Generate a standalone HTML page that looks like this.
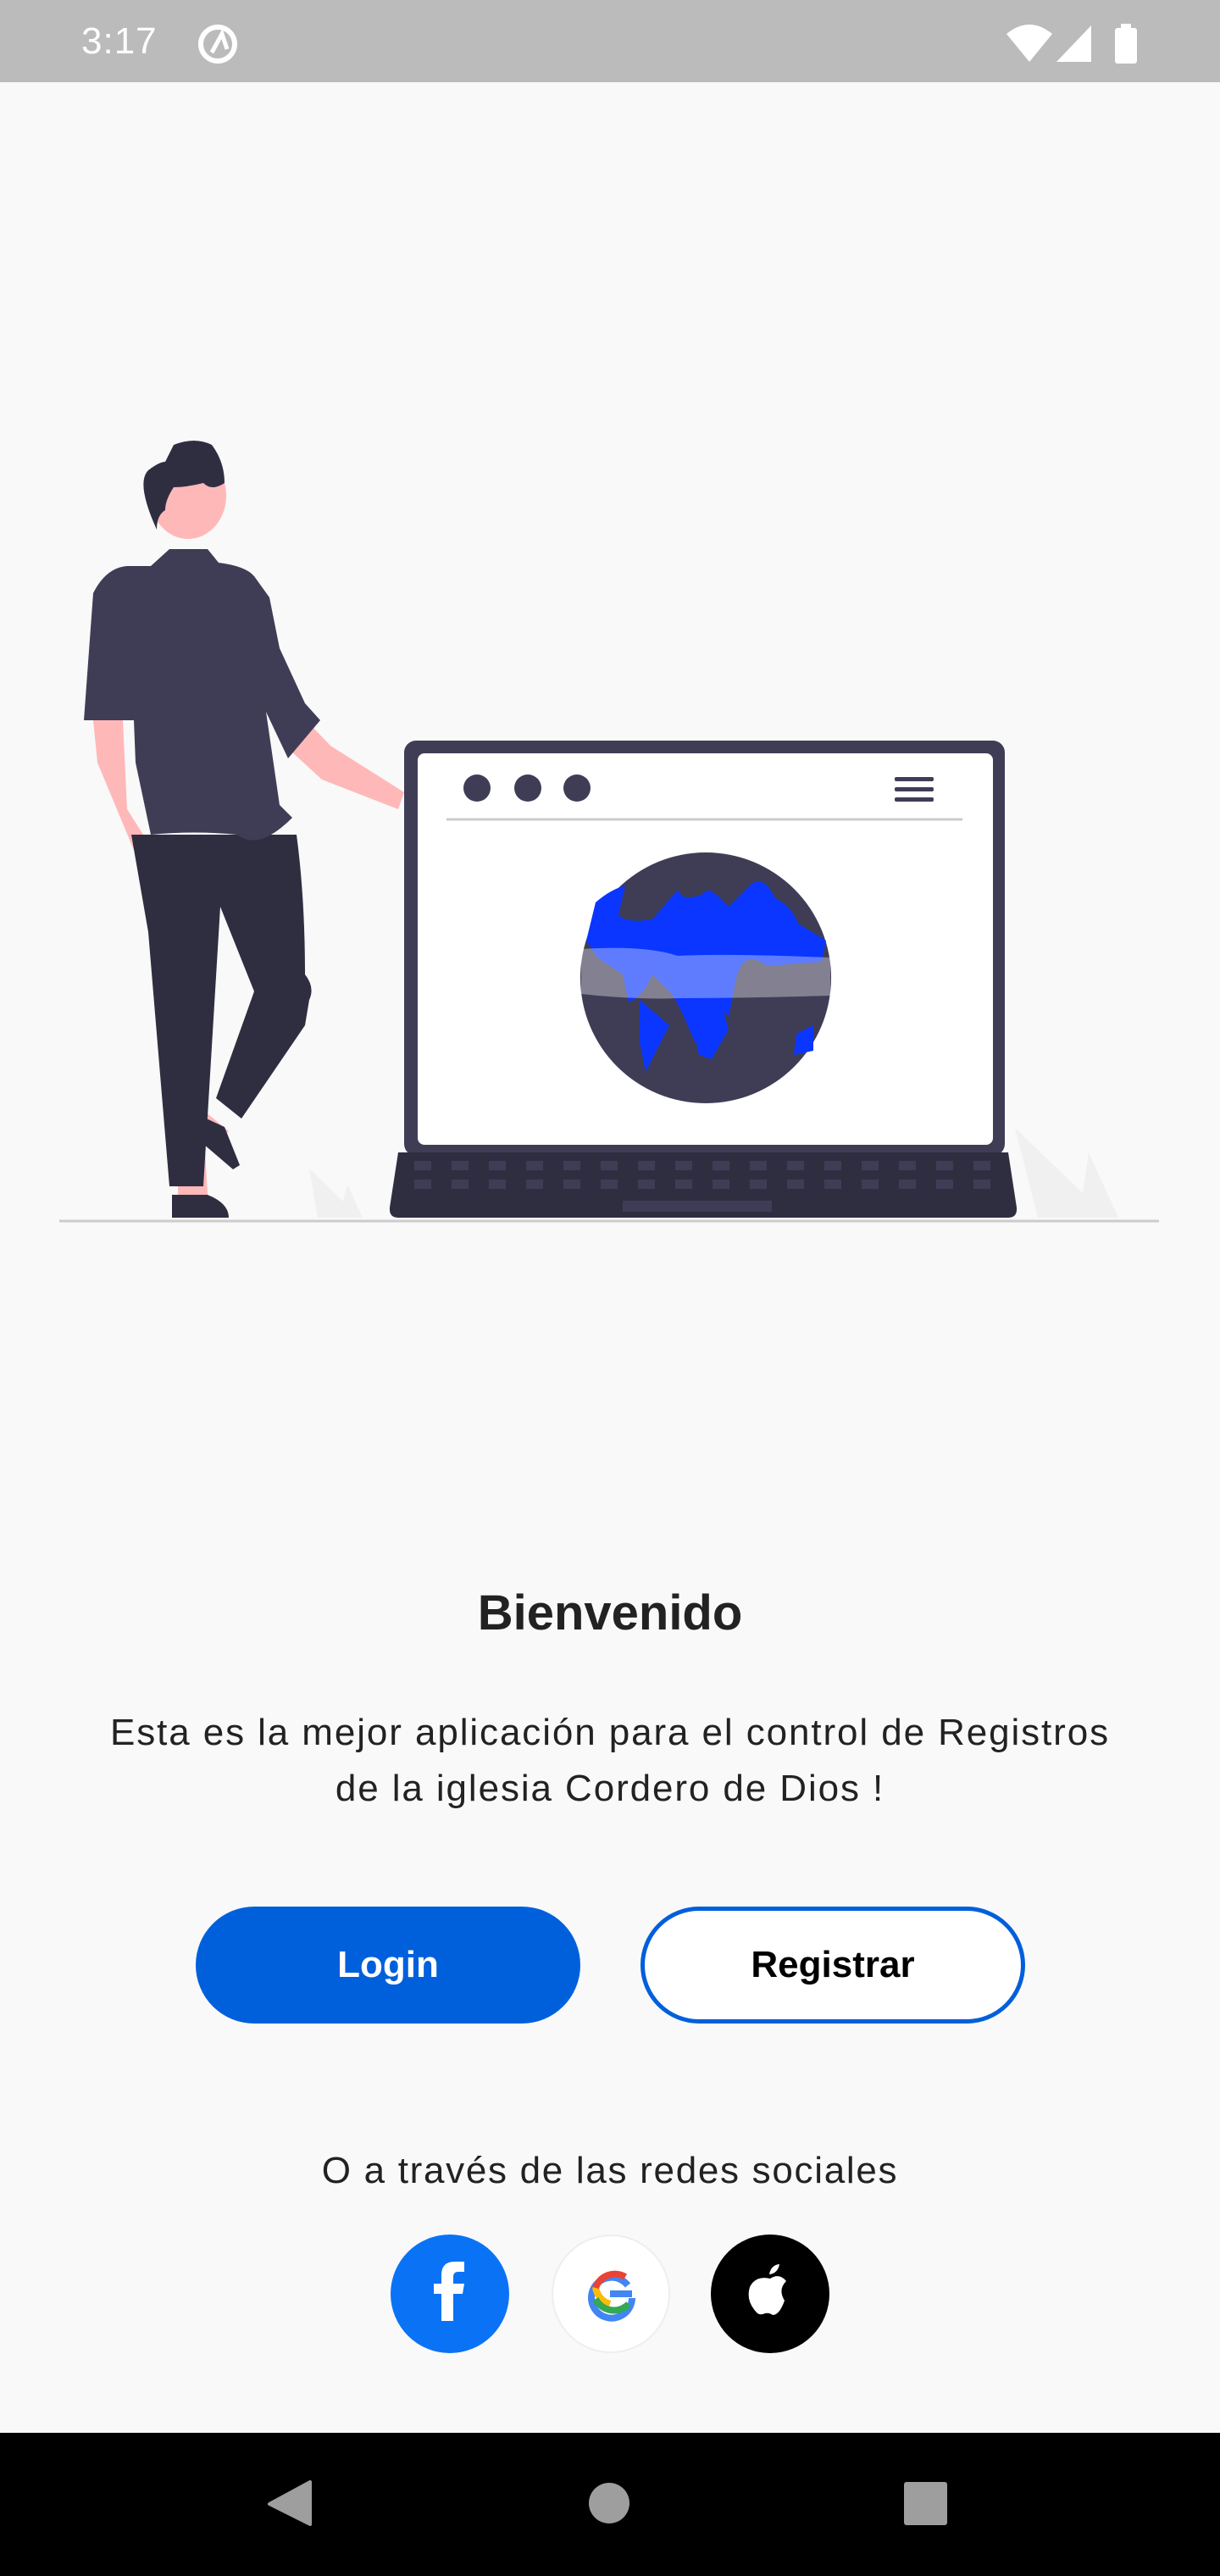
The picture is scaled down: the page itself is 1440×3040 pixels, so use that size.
<!DOCTYPE html>
<html><head><meta charset="utf-8"><style>
html,body{margin:0;padding:0;}
body{width:1440px;height:3040px;background:#f9f9f9;position:relative;overflow:hidden;font-family:"Liberation Sans",sans-serif;}
.abs{position:absolute;}
.status{left:0;top:0;width:1440px;height:97px;background:#bbbbbb;}
.time{left:96px;top:24px;color:#fff;font-size:44px;letter-spacing:1px;}
h1{position:absolute;left:0;width:1440px;top:1870px;margin:0;text-align:center;font-size:58px;font-weight:bold;color:#222;}
.p{left:0;width:1440px;top:2012px;text-align:center;font-size:44px;letter-spacing:1.9px;line-height:66px;color:#222;}
.btn{top:2250px;height:138px;width:454px;border-radius:69px;box-sizing:border-box;text-align:center;line-height:138px;font-size:44px;font-weight:bold;}
.login{left:231px;background:#0060dc;color:#fff;}
.reg{left:756px;background:#fff;border:5px solid #005fdb;line-height:128px;color:#000;}
.o{left:0;width:1440px;top:2537px;text-align:center;font-size:44px;letter-spacing:1.7px;color:#222;}
.c{top:2637px;width:140px;height:140px;border-radius:50%;}
.nav{left:0;top:2871px;width:1440px;height:169px;background:#000;}
</style></head><body>
<div class="abs status"></div>
<div class="abs time">3:17</div>
<svg class="abs" style="left:0;top:0" width="1440" height="97">
<circle cx="257" cy="52" r="20" fill="none" stroke="#fff" stroke-width="6"/>
<path d="M250 62 L262 40 L268 58" fill="none" stroke="#fff" stroke-width="5"/>
<path d="M1188 40 Q1215 18 1242 40 L1215 73 Z" fill="#fff"/>
<path d="M1247 73 L1288 30 L1288 73 Z" fill="#fff"/>
<rect x="1316" y="33" width="26" height="42" rx="3" fill="#fff"/>
<rect x="1323" y="28" width="12" height="6" fill="#fff"/>
</svg>

<svg class="abs" style="left:0;top:0" width="1440" height="1500">
<line x1="70" y1="1441" x2="1368" y2="1441" stroke="#cccccc" stroke-width="3"/>
<path d="M365 1379 L405 1418 L410 1398 L428 1437 L375 1437 Z" fill="#f0f0f0"/>
<path d="M1198 1331 L1278 1408 L1285 1360 L1320 1437 L1225 1437 Z" fill="#f0f0f0"/>
<rect x="477" y="874" width="709" height="490" rx="14" fill="#3f3d56"/>
<rect x="493" y="889" width="679" height="462" rx="8" fill="#fff"/>
<path d="M470 1360 L1190 1360 L1200 1425 Q1201 1437 1190 1437 L470 1437 Q459 1437 460 1425 Z" fill="#2f2e41"/>
<g fill="#3f3d56">
<rect x="489" y="1370" width="20" height="11"/><rect x="533" y="1370" width="20" height="11"/><rect x="577" y="1370" width="20" height="11"/><rect x="621" y="1370" width="20" height="11"/><rect x="665" y="1370" width="20" height="11"/><rect x="709" y="1370" width="20" height="11"/><rect x="753" y="1370" width="20" height="11"/><rect x="797" y="1370" width="20" height="11"/><rect x="841" y="1370" width="20" height="11"/><rect x="885" y="1370" width="20" height="11"/><rect x="929" y="1370" width="20" height="11"/><rect x="973" y="1370" width="20" height="11"/><rect x="1017" y="1370" width="20" height="11"/><rect x="1061" y="1370" width="20" height="11"/><rect x="1105" y="1370" width="20" height="11"/><rect x="1149" y="1370" width="20" height="11"/>
<rect x="489" y="1392" width="20" height="11"/><rect x="533" y="1392" width="20" height="11"/><rect x="577" y="1392" width="20" height="11"/><rect x="621" y="1392" width="20" height="11"/><rect x="665" y="1392" width="20" height="11"/><rect x="709" y="1392" width="20" height="11"/><rect x="753" y="1392" width="20" height="11"/><rect x="797" y="1392" width="20" height="11"/><rect x="841" y="1392" width="20" height="11"/><rect x="885" y="1392" width="20" height="11"/><rect x="929" y="1392" width="20" height="11"/><rect x="973" y="1392" width="20" height="11"/><rect x="1017" y="1392" width="20" height="11"/><rect x="1061" y="1392" width="20" height="11"/><rect x="1105" y="1392" width="20" height="11"/><rect x="1149" y="1392" width="20" height="11"/>
<rect x="735" y="1417" width="176" height="13"/>
<circle cx="563" cy="930" r="16"/><circle cx="623" cy="930" r="16"/><circle cx="681" cy="930" r="16"/>
<rect x="1056" y="917" width="46" height="5" rx="2"/><rect x="1056" y="929" width="46" height="5" rx="2"/><rect x="1056" y="941" width="46" height="5" rx="2"/>
</g>
<line x1="527" y1="967" x2="1136" y2="967" stroke="#cccccc" stroke-width="3"/>
<circle cx="833" cy="1154" r="148" fill="#3f3d56"/>
<path d="M692 1110 L703 1065 Q720 1050 738 1045 L730 1080 Q740 1090 770 1085 L800 1050 Q805 1065 830 1055 Q835 1045 850 1060 L860 1070 L885 1045 Q900 1030 915 1060 Q935 1070 942 1090 L975 1110 L970 1135 L905 1140 Q880 1120 870 1150 L860 1200 Q845 1180 830 1200 L820 1230 Q800 1180 790 1170 L770 1150 Q760 1175 742 1183 L735 1150 Q720 1140 705 1130 Z" fill="#0a36ff"/>
<path d="M755 1180 L790 1210 L762 1265 L755 1230 Z" fill="#0a36ff"/>
<path d="M810 1170 L850 1180 L860 1215 L840 1250 L825 1245 Q815 1200 810 1170 Z" fill="#0a36ff"/>
<path d="M940 1220 L960 1210 L960 1240 L937 1245 Z" fill="#0a36ff"/>
<path d="M686 1120 Q760 1115 800 1128 Q860 1125 980 1130 L980 1175 Q880 1178 800 1178 Q750 1180 686 1173 Z" fill="#fff" opacity="0.35"/>
<path d="M195 1000 L230 1000 L225 1030 Q215 1040 203 1030 Z" fill="#ffb8b8"/>
<path d="M331 875 L380 920 L470 955 L477 935 L390 880 L352 840 Z" fill="#ffb8b8"/>
<path d="M110 850 L145 850 L150 955 L185 1010 L165 1020 L115 900 Z" fill="#ffb8b8"/>
<path d="M210 1320 L240 1320 L245 1410 L210 1410 Z" fill="#ffb8b8"/>
<path d="M240 1310 L270 1335 L255 1350 L235 1325 Z" fill="#ffb8b8"/>
<path d="M155 985 L350 985 Q360 1060 360 1150 Q372 1165 365 1180 L360 1210 L285 1320 L255 1296 L300 1170 L260 1070 L240 1400 L200 1400 L175 1100 Z" fill="#2f2e41"/>
<path d="M235 1316 L265 1330 L283 1375 L275 1380 L240 1350 Z" fill="#2f2e41"/>
<path d="M203 1410 L245 1410 Q270 1420 270 1437 L203 1437 Z" fill="#2f2e41"/>
<path d="M200 648 L245 648 L258 664 Q290 668 300 680 L318 705 L330 765 L360 830 L378 850 L340 895 L314 840 L330 950 L345 965 Q305 1005 280 985 Q230 980 178 985 L160 900 L158 850 L99 850 L110 700 Q125 670 150 668 L178 668 Z" fill="#3f3d56"/>
<ellipse cx="222" cy="585" rx="45" ry="51" fill="#ffb8b8"/>
<path d="M185 625 Q160 570 175 555 Q188 545 195 545 L205 525 Q230 515 250 525 Q265 545 265 570 Q250 580 240 570 Q220 575 205 575 Q195 590 195 602 Q185 608 185 625 Z" fill="#2f2e41"/>
</svg>

<h1>Bienvenido</h1>
<div class="abs p">Esta es la mejor aplicación para el control de Registros<br>de la iglesia Cordero de Dios !</div>
<div class="abs btn login">Login</div>
<div class="abs btn reg">Registrar</div>
<div class="abs o">O a través de las redes sociales</div>
<div class="abs c" style="left:461px;background:#0a73f5"></div>
<div class="abs c" style="left:651px;background:#fff;border:2px solid #eee;box-sizing:border-box"></div>
<div class="abs c" style="left:839px;background:#000"></div>
<svg class="abs" style="left:0;top:2637px" width="1440" height="140">
<path d="M521 102 L521 70 L512 70 L512 58 L521 58 L521 48 Q521 32 537 32 L548 32 L548 44 L541 44 Q535 44 535 50 L535 58 L548 58 L546 70 L535 70 L535 102 Z" fill="#fff"/>
<path d="M741 60 A24 24 0 1 0 746 75" fill="none" stroke="#4285f4" stroke-width="8"/>
<path d="M720 82 A24 24 0 0 1 703 62" fill="none" stroke="#fbbc05" stroke-width="8"/>
<path d="M703 63 A24 24 0 0 1 738 50" fill="none" stroke="#ea4335" stroke-width="8"/>
<path d="M703 76 A24 24 0 0 0 742 82" fill="none" stroke="#34a853" stroke-width="8"/>
<rect x="720" y="66" width="26" height="8" fill="#4285f4"/>
<path d="M909 52 Q920 45 928 55 Q918 65 926 78 Q920 95 912 95 Q908 92 903 93 Q897 96 893 92 Q880 78 885 62 Q892 48 909 52 Z M908 47 Q910 36 920 35 Q918 46 908 47 Z" fill="#fff"/>
</svg>
<div class="abs nav"></div>
<svg class="abs" style="left:0;top:2871px" width="1440" height="169">
<path d="M366 58 L366 108 L318 84 Z" fill="#9e9e9e" stroke="#9e9e9e" stroke-width="4" stroke-linejoin="round"/>
<circle cx="719" cy="83" r="24" fill="#9e9e9e"/>
<rect x="1067" y="58" width="51" height="51" rx="3" fill="#9e9e9e"/>
</svg>
</body></html>
